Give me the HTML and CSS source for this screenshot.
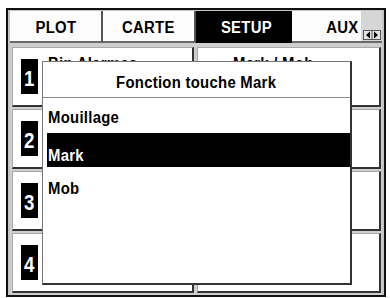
FILE: index.html
```html
<!DOCTYPE html>
<html>
<head>
<meta charset="utf-8">
<link rel="stylesheet" href="styles.css">
</head>
<body>
<div class="frame">
  <div class="tabs">
    <div class="tab plot"><span class="t">PLOT</span></div>
    <div class="tab carte"><span class="t">CARTE</span></div>
    <div class="tab setup"><span class="t">SETUP</span></div>
    <div class="tab aux"><span class="t">AUX</span></div>
    <div class="scroll">
      <svg class="arrows" width="18" height="10" viewBox="0 0 18 10">
        <rect x="0.5" y="0.5" width="17" height="9" fill="#e4e4e4" stroke="#555"/>
        <line x1="9" y1="0" x2="9" y2="10" stroke="#555"/>
        <polygon points="3,5 7,1.5 7,8.5" fill="#000"/>
        <polygon points="15,5 11,1.5 11,8.5" fill="#000"/>
      </svg>
    </div>
  </div>
  <div class="grid">
    <div class="cell left"><div class="num"><span class="d">1</span></div><div class="label"><span class="tl">Bin Alarmes</span></div></div>
    <div class="cell right"><div class="label"><span class="dash"></span><span class="tl">Mark / Mob</span></div></div>
    <div class="cell left"><div class="num"><span class="d">2</span></div></div>
    <div class="cell right"></div>
    <div class="cell left"><div class="num"><span class="d">3</span></div></div>
    <div class="cell right"></div>
    <div class="cell left"><div class="num"><span class="d">4</span></div></div>
    <div class="cell right"></div>
  </div>
  <div class="dialog">
    <div class="title"><span class="t">Fonction touche Mark</span></div>
    <ul class="list">
      <li class="item"><span class="tl">Mouillage</span></li>
      <li class="item sel"><span class="tl">Mark</span></li>
      <li class="item low"><span class="tl">Mob</span></li>
    </ul>
  </div>
</div>
</body>
</html>
```
FILE: styles.css
```css
html, body {
  margin: 0;
  padding: 0;
  background: #ffffff;
}
body {
  font-family: "Liberation Sans", Arial, sans-serif;
  font-weight: bold;
  color: #000;
}
.t, .tl, .d {
  display: inline-block;
  white-space: nowrap;
}
.t {
  transform: scaleX(0.93);
  transform-origin: center;
}
.tl {
  transform: scaleX(0.93);
  transform-origin: left center;
}
.d {
  transform: scaleX(0.85);
}
.frame {
  position: relative;
  box-sizing: border-box;
  margin: 8px 0 0 6px;
  width: 380px;
  height: 289px;
  border: 2px solid #111;
  background: #c4c4c4;
  padding: 1px 2px 0 2px;
  display: flex;
  flex-direction: column;
}
.tabs {
  display: flex;
  height: 32px;
  flex: none;
}
.tab {
  box-sizing: border-box;
  height: 32px;
  background: #fcfcfc;
  border-bottom: 2px solid #6a6a6a;
  font-size: 16px;
  letter-spacing: 0.3px;
  display: flex;
  align-items: center;
  justify-content: center;
  padding-top: 3px;
}
.plot { width: 93px; border-right: 2px solid #555; }
.carte { width: 93px; border-right: 2px solid #555; }
.setup { width: 96px; background: #000; color: #fff; border-bottom-color: #000; padding-left: 4px; }
.aux { width: 69px; padding-left: 32px; }
.scroll {
  flex: 1;
  background: #d6d6d6;
  border-bottom: 2px solid #6a6a6a;
  box-sizing: border-box;
  display: flex;
  align-items: flex-end;
  justify-content: center;
  padding-bottom: 1px;
}
.arrows { display: block; }
.grid {
  flex: 1;
  display: grid;
  grid-template-columns: 182px 184px;
  grid-template-rows: repeat(4, 1fr);
  column-gap: 3px;
  row-gap: 2px;
  padding: 4px 1px 2px 2px;
  background: #cfcfcf;
}
.cell {
  box-sizing: border-box;
  background: #fff;
  border-top: 1px solid #a8a8a8;
  border-left: 1px solid #a8a8a8;
  border-right: 2px solid #333;
  border-bottom: 2px solid #333;
  display: flex;
  align-items: center;
}
.num {
  box-sizing: border-box;
  width: 17px;
  height: 35px;
  margin-left: 8px;
  background: #000;
  color: #fff;
  font-size: 22px;
  display: flex;
  align-items: center;
  justify-content: center;
  padding-top: 5px;
}
.label {
  align-self: flex-start;
  margin-top: 7px;
  font-size: 16px;
  letter-spacing: 0.3px;
  line-height: 17px;
  display: flex;
  align-items: center;
}
.left .label { margin-left: 10px; }
.right .label { margin-left: 10px; }
.dash {
  display: inline-block;
  width: 17px;
  height: 4px;
  background: #000;
  margin-right: 8px;
  margin-top: 6px;
}
.dialog {
  position: absolute;
  left: 34px;
  top: 51px;
  width: 310px;
  height: 224px;
  box-sizing: border-box;
  background: #fff;
  border-top: 1px solid #777;
  border-left: 1px solid #777;
  border-right: 2px solid #333;
  border-bottom: 2px solid #333;
}
.title {
  height: 36px;
  box-sizing: border-box;
  border-bottom: 1px solid #8a8a8a;
  text-align: center;
  font-size: 16px;
  letter-spacing: 0.3px;
  line-height: 17px;
  padding-top: 12px;
}
.list {
  list-style: none;
  margin: 1px 0 0 0;
  padding: 0 0 0 4px;
}
.item {
  height: 34px;
  box-sizing: border-box;
  padding: 10px 0 0 1px;
  font-size: 16px;
  letter-spacing: 0.3px;
  line-height: 17px;
}
.sel {
  background: #000;
  color: #fff;
  padding-top: 14px;
}
.low {
  padding-top: 13px;
}
```
